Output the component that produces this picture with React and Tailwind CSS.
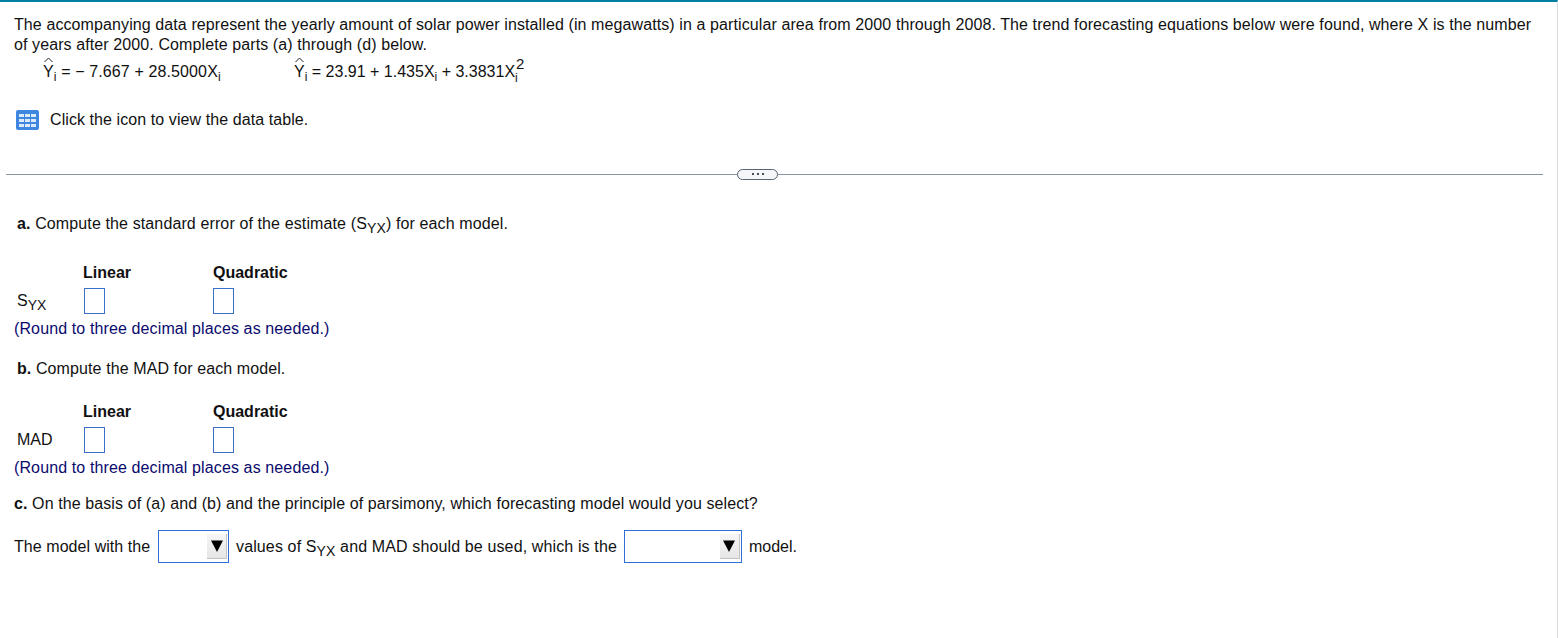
import { Fragment } from 'react'

const Sub = ({ children }) => <span className="relative top-[4px] text-[12px] leading-none">{children}</span>

const YHat = () => (
  <span className="relative inline-block">
    Y
    <svg className="absolute left-[1px] top-[-3px]" width="9" height="6" viewBox="0 0 9 6" fill="none">
      <path d="M0.5 5 L4.5 1 L8.5 5" stroke="#222" strokeWidth="1" />
    </svg>
  </span>
)

const Syx = () => (
  <span>S<span className="relative top-[4px] text-[14px]">YX</span></span>
)

const AnswerBox = () => <div className="w-[21px] h-[26px] border border-[#3a70c8] bg-white" />

const Dropdown = ({ width }) => (
  <div className={`${width} h-[33px] border border-[#2f6fd6] bg-white flex items-center justify-end pr-px`}>
    <div className="w-[20px] h-[25px] bg-gradient-to-b from-[#f6f6f6] to-[#e6e6e6] border-b border-r border-[#c4c4c4] flex items-center justify-center">
      <svg width="12" height="12" viewBox="0 0 12 12">
        <path d="M0 0.5 H12 L6 12 Z" fill="#000" />
      </svg>
    </div>
  </div>
)

const TableIcon = () => (
  <svg width="23" height="20" viewBox="0 0 23 20">
    <rect width="23" height="20" rx="2" fill="#3f86e0" />
    {[4, 9, 14].map(y => (
      <Fragment key={y}>
        {[3, 9, 15].map(x => <rect key={x} x={x} y={y} width="5" height="3" fill="#dbe9fb" />)}
      </Fragment>
    ))}
  </svg>
)

const AnswerGrid = ({ label }) => (
  <>
    <div className="h-[28px] flex items-center font-bold pl-[83px]">
      <span className="w-[130px]">Linear</span>
      <span>Quadratic</span>
    </div>
    <div className="h-[28px] flex items-center pl-[17px]">
      <span className="w-[67px]">{label}</span>
      <div className="w-[129px]"><AnswerBox /></div>
      <AnswerBox />
    </div>
    <div className="h-[28px] flex items-center pl-[14px] text-[#0a0a6e] tracking-[0.12px]">(Round to three decimal places as needed.)</div>
  </>
)

export default function App() {
  return (
    <div className="min-h-[638px] bg-white border-t-2 border-[#007fa3] border-r border-r-[#dcdcdc] text-[16px] text-[#111] font-['Liberation_Sans',Arial,sans-serif] overflow-hidden">
      <div className="pt-[13px] pl-[14px] pr-[20px] leading-[20px] tracking-[0.1px]">
        The accompanying data represent the yearly amount of solar power installed (in megawatts) in a particular area from 2000 through 2008. The trend forecasting equations below were found, where X is the number of years after 2000. Complete parts (a) through (d) below.
      </div>

      <div className="h-[34px] flex items-center pl-[43px]">
        <span className="w-[251px] whitespace-nowrap tracking-[0.12px]"><YHat /><Sub>i</Sub> = − 7.667 + 28.5000X<Sub>i</Sub></span>
        <span className="whitespace-nowrap"><YHat /><Sub>i</Sub> = 23.91 + 1.435X<Sub>i</Sub> + 3.3831X<span className="relative inline-block w-[10px] h-[10px]"><span className="absolute left-[1px] top-[-11px] text-[15px] leading-none">2</span><span className="absolute left-0 top-[5px] text-[12px] leading-none">i</span></span></span>
      </div>

      <div className="mt-[19px] h-[24px] flex items-center pl-[16px] gap-[11px] tracking-[0.08px]">
        <TableIcon />
        <span>Click the icon to view the data table.</span>
      </div>

      <div className="mt-[35px] mr-[14px] ml-[6px] h-[14px] flex items-center">
        <div className="w-[731px] h-px bg-[#8a93a3]" />
        <div className="w-[41px] h-[11px] rounded-full border border-[#5a6675] bg-[#f4f6f8] flex items-center justify-center gap-[3px]">
          <span className="w-[2px] h-[2px] bg-[#444f5e]" />
          <span className="w-[2px] h-[2px] bg-[#444f5e]" />
          <span className="w-[2px] h-[2px] bg-[#444f5e]" />
        </div>
        <div className="flex-1 h-px bg-[#8a93a3]" />
      </div>

      <div className="mt-[33px] h-[20px] flex items-center pl-[17px] whitespace-pre tracking-[0.12px]">
        <b>a.</b> Compute the standard error of the estimate (<Syx />) for each model.
      </div>

      <div className="mt-[25px]">
        <AnswerGrid label={<Syx />} />
      </div>

      <div className="mt-[14px] h-[24px] flex items-center pl-[17px] whitespace-pre tracking-[0.1px]">
        <b>b.</b> Compute the MAD for each model.
      </div>

      <div className="mt-[17px]">
        <AnswerGrid label="MAD" />
      </div>

      <div className="mt-[10px] h-[24px] flex items-center pl-[14px] whitespace-pre tracking-[0.1px]">
        <b>c.</b> On the basis of (a) and (b) and the principle of parsimony, which forecasting model would you select?
      </div>

      <div className="mt-[14px] flex items-center pl-[14px] whitespace-pre">
        <span className="w-[144px] tracking-[0.06px]">The model with the</span>
        <Dropdown width="w-[71px]" />
        <span className="ml-[7px] tracking-[0.13px]">values of <Syx /> and MAD should be used, which is the</span>
        <div className="ml-[7px]"><Dropdown width="w-[118px]" /></div>
        <span className="ml-[7px]">model.</span>
      </div>
    </div>
  )
}
